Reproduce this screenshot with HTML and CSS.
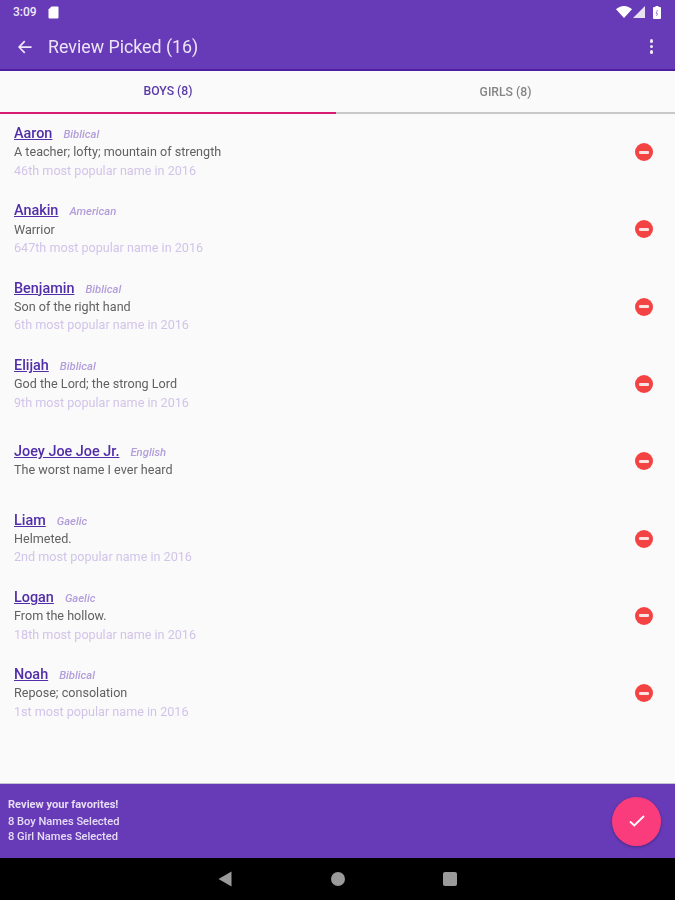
FILE: index.html
```html
<!DOCTYPE html>
<html lang="en">
<head>
    <meta charset="UTF-8">
    <meta name="viewport" content="width=device-width, initial-scale=1.0">
    <title>Review Picked</title>
    <link rel="stylesheet" href="styles.css">
</head>
<body>
    <div class="app">
        <header class="app-header">
            <div class="status-bar">
                <div class="status-left">
                    <span class="status-time">3:09</span>
                    <svg width="11" height="13" viewBox="0 0 11 13"><path d="M3.5 0.5H9.5a1 1 0 0 1 1 1V11.5a1 1 0 0 1-1 1H1.5a1 1 0 0 1-1-1V3.5Z" fill="#fff"/></svg>
                </div>
                <div class="status-right">
                    <svg width="16" height="12" viewBox="0 0 16 12"><path d="M0 3.2C2 1.3 4.8 0 8 0s6 1.3 8 3.2L8 12Z" fill="#fff"/></svg>
                    <svg width="12" height="12" viewBox="0 0 12 12"><path d="M12 0V12H0Z" fill="#fff" opacity="0.85"/></svg>
                    <svg class="battery" width="8" height="13" viewBox="0 0 8 13"><path d="M2.5 0H5.5V1H7a1 1 0 0 1 1 1V12a1 1 0 0 1-1 1H1a1 1 0 0 1-1-1V2a1 1 0 0 1 1-1H2.5Z" fill="#fff"/><path d="M4.500 4 3 7.500H4.500L3.500 10" fill="none" stroke="#a78fd6" stroke-width="1"/></svg>
                </div>
            </div>
            <div class="toolbar">
                <svg class="back-icon" width="14" height="14" viewBox="0 0 16 16"><path d="M15.5 7H3.4l5-5L7 .6 0 8l7 7.4 1.4-1.4-5-5h12.100Z" fill="#f1e9fa"/></svg>
                <h1 class="toolbar-title">Review Picked (16)</h1>
                <div class="more-icon"><span></span><span></span><span></span></div>
            </div>
        </header>

        <nav class="tabs">
            <div class="tab tab-active">BOYS (8)</div>
            <div class="tab">GIRLS (8)</div>
        </nav>

        <main class="name-list">
            <div class="name-row">
                <div class="name-info">
                    <div class="name-head"><a class="name-link">Aaron</a><span class="origin">Biblical</span></div>
                    <p class="meaning">A teacher; lofty; mountain of strength</p>
                    <p class="rank">46th most popular name in 2016</p>
                </div>
                <span class="remove-btn"></span>
            </div>
            <div class="name-row">
                <div class="name-info">
                    <div class="name-head"><a class="name-link">Anakin</a><span class="origin">American</span></div>
                    <p class="meaning">Warrior</p>
                    <p class="rank">647th most popular name in 2016</p>
                </div>
                <span class="remove-btn"></span>
            </div>
            <div class="name-row">
                <div class="name-info">
                    <div class="name-head"><a class="name-link">Benjamin</a><span class="origin">Biblical</span></div>
                    <p class="meaning">Son of the right hand</p>
                    <p class="rank">6th most popular name in 2016</p>
                </div>
                <span class="remove-btn"></span>
            </div>
            <div class="name-row">
                <div class="name-info">
                    <div class="name-head"><a class="name-link">Elijah</a><span class="origin">Biblical</span></div>
                    <p class="meaning">God the Lord; the strong Lord</p>
                    <p class="rank">9th most popular name in 2016</p>
                </div>
                <span class="remove-btn"></span>
            </div>
            <div class="name-row">
                <div class="name-info">
                    <div class="name-head"><a class="name-link">Joey Joe Joe Jr.</a><span class="origin">English</span></div>
                    <p class="meaning">The worst name I ever heard</p>
                </div>
                <span class="remove-btn"></span>
            </div>
            <div class="name-row">
                <div class="name-info">
                    <div class="name-head"><a class="name-link">Liam</a><span class="origin">Gaelic</span></div>
                    <p class="meaning">Helmeted.</p>
                    <p class="rank">2nd most popular name in 2016</p>
                </div>
                <span class="remove-btn"></span>
            </div>
            <div class="name-row">
                <div class="name-info">
                    <div class="name-head"><a class="name-link">Logan</a><span class="origin">Gaelic</span></div>
                    <p class="meaning">From the hollow.</p>
                    <p class="rank">18th most popular name in 2016</p>
                </div>
                <span class="remove-btn"></span>
            </div>
            <div class="name-row">
                <div class="name-info">
                    <div class="name-head"><a class="name-link">Noah</a><span class="origin">Biblical</span></div>
                    <p class="meaning">Repose; consolation</p>
                    <p class="rank">1st most popular name in 2016</p>
                </div>
                <span class="remove-btn"></span>
            </div>
        </main>

        <footer class="summary">
            <div class="summary-text">
                <strong>Review your favorites!</strong>
                <span>8 Boy Names Selected</span>
                <span>8 Girl Names Selected</span>
            </div>
            <button class="fab">
                <svg width="16" height="12" viewBox="0 0 16 12"><path d="M1 6.500 5.300 10.500 15 1" fill="none" stroke="#fff" stroke-width="1.800"/></svg>
            </button>
        </footer>

        <div class="nav-bar">
            <svg width="14" height="16" viewBox="0 0 14 16"><path d="M13.500 0.500V15.500L0.500 8Z" fill="#9a9a9a"/></svg>
            <span class="nav-home"></span>
            <span class="nav-recent"></span>
        </div>
    </div>
</body>
</html>
```
FILE: styles.css
```css
* {
    box-sizing: border-box;
    margin: 0;
    padding: 0;
}
body {
    font-family: Roboto, 'Noto Sans', sans-serif;
    background: #fafafa;
}
/* the source capture is soft, so everything gets a slight blur */
.app {
    width: 675px;
    height: 900px;
    display: flex;
    flex-direction: column;
    overflow: hidden;
    filter: blur(0.6px);
}
/* header */
.app-header {
    height: 71px;
    background: #673ab7;
    border-bottom: 2px solid #4f1fa3;
    color: white;
}
.status-bar {
    height: 24px;
    padding: 0 14px 0 13px;
    display: flex;
    justify-content: space-between;
    align-items: center;
}
.status-left, .status-right {
    display: flex;
    align-items: center;
}
.status-left {
    gap: 11px;
}
.status-right {
    gap: 1px;
}
.battery {
    margin-left: 7px;
}
.status-time {
    font-size: 12px;
    font-weight: 500;
    color: #f1e9fa;
}
.toolbar {
    height: 45px;
    padding: 0 22px 0 18px;
    display: flex;
    align-items: center;
}
.toolbar-title {
    flex: 1;
    margin-left: 16px;
    font-size: 17.800px;
    font-weight: 400;
    color: #ece4f6;
}
.more-icon {
    display: flex;
    flex-direction: column;
    gap: 2px;
}
.more-icon span {
    width: 3.500px;
    height: 3.500px;
    border-radius: 50%;
    background: #f1e9fa;
}
/* tabs */
.tabs {
    height: 43px;
    display: flex;
    border-bottom: 2px solid #c8c8c8;
}
.tab {
    width: 336px;
    display: flex;
    align-items: center;
    justify-content: center;
    padding-bottom: 2px;
    font-size: 12.200px;
    font-weight: 500;
    color: #858585;
    margin-bottom: -2px;
}
.tab + .tab {
    flex: 1;
}
.tab-active {
    color: #5a3aa8;
    border-bottom: 2px solid #d81b72;
}
/* list */
.name-list {
    flex: 1;
    margin-top: -0.500px;
}
.name-row {
    height: 77.300px;
    padding: 0 22px 0 14px;
    display: flex;
    justify-content: space-between;
    align-items: center;
}
.name-head {
    display: flex;
    align-items: baseline;
    gap: 11px;
    height: 18.500px;
    padding-top: 0.200px;
}
.name-link {
    font-size: 14.400px;
    font-weight: 500;
    color: #512da8;
    text-decoration: underline;
    text-underline-offset: 1px;
}
.origin {
    font-size: 11.300px;
    font-weight: 500;
    font-style: italic;
    color: #b39ddb;
}
.meaning {
    font-size: 12.600px;
    line-height: 18.500px;
    color: #616161;
}
.rank {
    font-size: 12.600px;
    line-height: 17.500px;
    color: #d1c4e9;
}
.remove-btn {
    width: 18px;
    height: 18px;
    border-radius: 50%;
    background: #f44343;
    display: flex;
    align-items: center;
    justify-content: center;
}
.remove-btn::before {
    content: "";
    width: 10px;
    height: 3px;
    border-radius: 1px;
    background: #fbe3e3;
}
/* bottom */
.summary {
    height: 75px;
    flex-shrink: 0;
    background: #673ab7;
    border-top: 1px solid #c9c2d4;
    padding: 0 14px 0 8px;
    display: flex;
    justify-content: space-between;
    align-items: center;
}
.summary-text {
    display: flex;
    flex-direction: column;
    font-size: 11.100px;
    line-height: 14.500px;
    font-weight: 500;
    color: #e6dcf5;
}
.summary-text strong {
    font-weight: 700;
    margin-bottom: 3px;
}
.fab {
    width: 49px;
    height: 49px;
    border: none;
    border-radius: 50%;
    background: #fb3c7c;
    box-shadow: 0 1px 3px rgba(0,0,0,0.3);
    display: flex;
    align-items: center;
    justify-content: center;
}
.nav-bar {
    height: 42px;
    flex-shrink: 0;
    background: black;
    padding-left: 218px;
    display: flex;
    align-items: center;
    gap: 98.500px;
}
.nav-home {
    width: 14px;
    height: 14px;
    border-radius: 50%;
    background: #9a9a9a;
}
.nav-recent {
    width: 14px;
    height: 14px;
    border-radius: 2px;
    background: #9a9a9a;
}
```
